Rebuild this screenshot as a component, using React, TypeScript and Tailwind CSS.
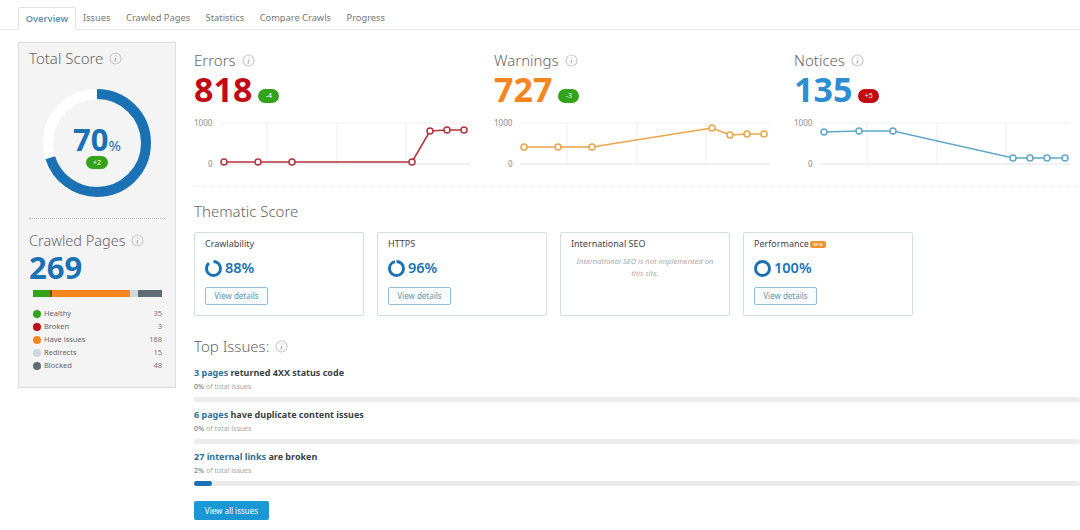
import React from "react";

const font = { fontFamily: '"Noto Sans", "Open Sans", sans-serif' };

function Info({ className = "" }: { className?: string }) {
  return (
    <svg width="13" height="13" viewBox="0 0 13 13" className={`inline-block shrink-0 ${className}`}>
      <circle cx="6.5" cy="6.5" r="5.5" fill="none" stroke="#c9c9c9" strokeWidth="1.2" />
      <path d="M7 3.6v.9M6.6 6 6 9.6" stroke="#a8a8a8" strokeWidth="1.1" fill="none" />
    </svg>
  );
}

function Ring({ pct, size, stroke }: { pct: number; size: number; stroke: number }) {
  const r = (size - stroke) / 2;
  const c = 2 * Math.PI * r;
  return (
    <svg width={size} height={size} viewBox={`0 0 ${size} ${size}`} className="shrink-0">
      <circle cx={size / 2} cy={size / 2} r={r} fill="none" stroke="#ffffff" strokeWidth={stroke} />
      <circle
        cx={size / 2}
        cy={size / 2}
        r={r}
        fill="none"
        stroke="#1a72b5"
        strokeWidth={stroke}
        strokeDasharray={`${(c * pct) / 100} ${c}`}
        transform={`rotate(-90 ${size / 2} ${size / 2})`}
      />
    </svg>
  );
}

function Chart({ color, points }: { color: string; points: [number, number][] }) {
  return (
    <svg width="290" height="60" viewBox="0 0 290 60" className="block">
      <path d="M26 7H276" stroke="#eeeeee" />
      <path d="M73 7V48M143 7V48M212 7V48" stroke="#eeeeee" />
      <path d="M26 48H276" stroke="#dfe3e8" />
      <text x="0" y="10" fontSize="8" fill="#8a8a8a">1000</text>
      <text x="14" y="51" fontSize="8" fill="#8a8a8a">0</text>
      <polyline points={points.map((p) => p.join(",")).join(" ")} fill="none" stroke={color} strokeWidth="1.6" />
      {points.map((p, i) => (
        <circle key={i} cx={p[0]} cy={p[1]} r="3" fill="#ffffff" stroke={color} strokeWidth="1.5" />
      ))}
    </svg>
  );
}

function Metric({
  title,
  value,
  valueClass,
  delta,
  badgeClass,
  color,
  points,
  width,
}: {
  title: string;
  value: string;
  valueClass: string;
  delta: string;
  badgeClass: string;
  color: string;
  points: [number, number][];
  width: string;
}) {
  return (
    <div className={width}>
      <div className="flex items-center gap-[6px] h-[20px] text-[15px] leading-[20px] font-light text-[#666666]">
        {title}
        <Info />
      </div>
      <div className="flex items-center h-[38px]">
        <span className={`text-[34px] font-bold leading-none ${valueClass}`}>{value}</span>
        <span className={`ml-[6px] mt-[14px] w-[21px] h-[14px] rounded-full text-[7px] leading-[14px] text-center text-white ${badgeClass}`}>
          {delta}
        </span>
      </div>
      <div className="mt-[8px]">
        <Chart color={color} points={points} />
      </div>
    </div>
  );
}

function ThemeCard({ title, pct, beta }: { title: string; pct: number; beta?: boolean }) {
  return (
    <div className="w-[170px] h-[84px] shrink-0 bg-white border border-[#d5dde2] rounded-[2px] pl-[10px] pt-[4px]">
      <div className="flex items-center h-[14px] text-[9px] text-[#444444]">
        {title}
        {beta && (
          <span className="ml-[1px] w-[16px] h-[7px] rounded-[2px] bg-[#f0932b] text-[4px] leading-[7px] text-center text-white">BETA</span>
        )}
      </div>
      <div className="flex items-center gap-[3px] mt-[8px] h-[18px]">
        <Ring pct={pct} size={17} stroke={3} />
        <span className="text-[14.5px] font-semibold text-[#1a72b5]">{pct}%</span>
      </div>
      <div className="mt-[10px] w-[63px] h-[18px] border border-[#8fbfd6] rounded-[2px] bg-[#f8fcfd] text-[8px] leading-[16px] text-center text-[#5f97b3]">
        View details
      </div>
    </div>
  );
}

function Issue({ lead, rest, pct, fill }: { lead: string; rest: string; pct: string; fill?: boolean }) {
  return (
    <div className="h-[42px]">
      <div className="h-[14px] text-[9px] leading-[14px] font-bold text-[#3a3f45]">
        <span className="text-[#2c7096]">{lead}</span> {rest}
      </div>
      <div className="h-[14px] text-[7px] leading-[14px] text-[#a5a5a5]">
        <span className="font-semibold text-[#909090]">{pct}</span> of total issues
      </div>
      <div className="mt-[3px] h-[5px] bg-[#ececec] rounded-full">
        {fill && <div className="w-[18px] h-[5px] bg-[#1a72b5] rounded-full" />}
      </div>
    </div>
  );
}

const legend: [string, string, string][] = [
  ["Healthy", "35", "bg-[#33a31a]"],
  ["Broken", "3", "bg-[#c20a12]"],
  ["Have issues", "168", "bg-[#f5861f]"],
  ["Redirects", "15", "bg-[#ced7dd]"],
  ["Blocked", "48", "bg-[#5e6c73]"],
];

export default function App() {
  return (
    <div style={font} className="w-[1080px] h-[530px] overflow-hidden bg-white">
      <div className="flex h-[30px] pl-[18px] pt-[7px] border-b border-[#e4e6e8] text-[9.3px] text-[#777777]">
        <div className="w-[58px] h-[23px] bg-white border border-b-0 border-[#dfe3e6] rounded-t-[2px] text-center leading-[22px] font-semibold text-[#5c93ad]">
          Overview
        </div>
        <div className="flex items-center gap-[15.5px] h-[22px] pl-[7px]">
          <span>Issues</span>
          <span>Crawled Pages</span>
          <span>Statistics</span>
          <span>Compare Crawls</span>
          <span>Progress</span>
        </div>
      </div>

      <div className="flex pl-[18px] pt-[12px]">
        <aside className="w-[158px] h-[346px] shrink-0 bg-[#f4f4f4] border border-[#dcdcdc] px-[10px] pt-[5px]">
          <div className="flex items-center gap-[6px] h-[20px] text-[15px] leading-[20px] font-light text-[#666666]">
            Total Score
            <Info />
          </div>
          <div className="relative mt-[21px] ml-[14px] w-[108px] h-[108px]">
            <Ring pct={70} size={108} stroke={10} />
            <div className="absolute inset-0 flex flex-col items-center pt-[35px]">
              <div className="leading-none text-[#1a72b5] h-[29px] flex items-baseline">
                <span className="text-[31px] font-bold leading-none">70</span>
                <span className="text-[15px] leading-none">%</span>
              </div>
              <span className="mt-[3px] w-[22px] h-[13px] rounded-full bg-[#33a31a] text-[7px] leading-[13px] text-center text-white">+2</span>
            </div>
          </div>
          <div className="mt-[21px] border-t border-dotted border-[#bdbdbd]" />
          <div className="flex items-center gap-[5px] h-[20px] mt-[11px] text-[14.5px] leading-[20px] font-light text-[#666666]">
            Crawled Pages
            <Info />
          </div>
          <div className="h-[38px] -mt-[2px] text-[31px] font-bold leading-[38px] text-[#1a72b5]">269</div>
          <div className="flex h-[7px] mt-[4px] ml-[4px] w-[129px]">
            <div className="w-[17px] bg-[#33a31a]" />
            <div className="w-[2px] bg-[#7a4a10]" />
            <div className="w-[78px] bg-[#f5861f]" />
            <div className="w-[8px] bg-[#ced7dd]" />
            <div className="w-[24px] bg-[#5e6c73]" />
          </div>
          <div className="mt-[10px] ml-[4px] w-[129px]">
            {legend.map(([name, n, dot]) => (
              <div key={name} className="flex items-center h-[13px] text-[7.5px] text-[#666666]">
                <span className={`w-[8px] h-[8px] rounded-full mr-[3px] ${dot}`} />
                <span className="flex-1">{name}</span>
                <span className="text-[#777777]">{n}</span>
              </div>
            ))}
          </div>
        </aside>

        <main className="ml-[18px] w-[886px] shrink-0">
          <div className="flex h-[145px] pt-[8px] border-b border-dotted border-[#ececec]">
            <Metric
              width="w-[300px]"
              title="Errors"
              value="818"
              valueClass="text-[#c20a12]"
              delta="-4"
              badgeClass="bg-[#33a31a]"
              color="#b5333d"
              points={[[30, 46], [64, 46], [98, 46], [218, 46], [236, 15], [253, 14], [270, 14]]}
            />
            <Metric
              width="w-[300px]"
              title="Warnings"
              value="727"
              valueClass="text-[#f5861f]"
              delta="-3"
              badgeClass="bg-[#33a31a]"
              color="#eba548"
              points={[[30, 31], [64, 31], [98, 31], [218, 12], [236, 19], [253, 18], [270, 18]]}
            />
            <Metric
              width="w-[286px]"
              title="Notices"
              value="135"
              valueClass="text-[#2f8ed3]"
              delta="+5"
              badgeClass="bg-[#c20a12]"
              color="#5fa8c9"
              points={[[30, 16], [65, 15], [99, 15], [219, 42], [236, 42], [253, 42], [271, 42]]}
            />
          </div>

          <div className="mt-[14px] h-[20px] text-[15px] leading-[20px] font-light text-[#666666]">Thematic Score</div>
          <div className="flex gap-[13px] mt-[11px]">
            <ThemeCard title="Crawlability" pct={88} />
            <ThemeCard title="HTTPS" pct={96} />
            <div className="w-[170px] h-[84px] shrink-0 bg-white border border-[#d5dde2] rounded-[2px] px-[10px] pt-[4px]">
              <div className="h-[14px] text-[9px] leading-[14px] text-[#444444]">International SEO</div>
              <div className="mt-[4px] text-[7.6px] leading-[12px] italic text-center text-[#aaaaaa]">
                International SEO is not implemented on this site.
              </div>
            </div>
            <ThemeCard title="Performance" pct={100} beta />
          </div>

          <div className="flex items-center gap-[6px] mt-[20px] h-[20px] text-[15px] leading-[20px] font-light text-[#666666]">
            Top Issues:
            <Info />
          </div>
          <div className="mt-[10px]">
            <Issue lead="3 pages" rest="returned 4XX status code" pct="0%" />
            <Issue lead="6 pages" rest="have duplicate content issues" pct="0%" />
            <Issue lead="27 internal links" rest="are broken" pct="2%" fill />
          </div>
          <div className="mt-[9px] w-[75px] h-[19px] bg-[#1a98d5] rounded-[2px] text-[8px] leading-[19px] text-center text-white">
            View all issues
          </div>
        </main>
      </div>
    </div>
  );
}
